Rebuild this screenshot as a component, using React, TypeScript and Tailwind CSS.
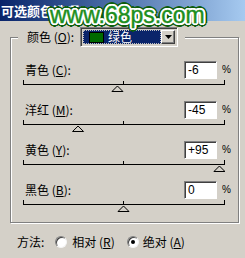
const rows = [
  { name: "青色", key: "C", value: "-6", v: -6 },
  { name: "洋红", key: "M", value: "-45", v: -45 },
  { name: "黄色", key: "Y", value: "+95", v: 95 },
  { name: "黑色", key: "B", value: "0", v: 0 },
];

const Slider = ({ v }: { v: number }) => {
  const cx = 100.5 + (v / 100) * 101;
  return (
    <svg width="202" height="22" className="block">
      <rect x="0" y="5" width="202" height="1" fill="#000" />
      <rect x="0" y="1" width="1" height="4" fill="#000" />
      <rect x="201" y="1" width="1" height="4" fill="#000" />
      <rect x="100" y="2" width="1" height="3" fill="#000" />
      <polygon
        points={`${cx},7 ${cx - 5.5},12.5 ${cx + 5.5},12.5`}
        fill="#d4d0c8"
        stroke="#000"
        strokeWidth="1"
      />
    </svg>
  );
};

const Radio = ({ checked }: { checked?: boolean }) => (
  <span className="w-[12px] h-[12px] rounded-full bg-white border border-t-[#808080] border-l-[#808080] border-b-[#f4f4f4] border-r-[#f4f4f4] shadow-[inset_1px_1px_0_#404040] flex items-center justify-center">
    {checked && <span className="w-[4px] h-[4px] rounded-full bg-black" />}
  </span>
);

export default function App() {
  return (
    <div className="w-[245px] h-[258px] bg-[#d4d0c8] relative overflow-hidden text-[12px] text-black font-['Noto_Sans_CJK_SC',sans-serif]">
      {/* title bar */}
      <div className="h-[21px] bg-gradient-to-r from-[#0a246a] to-[#a6caf0] flex items-center pl-[1px]">
        <span className="text-white font-bold text-[13px] leading-none">可选颜色选项</span>
      </div>

      {/* watermark */}
      <div className="absolute left-[50px] top-[4px] leading-[23px] text-[23px] whitespace-nowrap text-[#1d8f1d] font-['Liberation_Sans',Arial,sans-serif] pointer-events-none [-webkit-text-stroke:0.4px_#1d8f1d] [text-shadow:1px_0_0_#fff,-1px_0_0_#fff,0_1px_0_#fff,0_-1px_0_#fff,1px_1px_0_#fff,-1px_1px_0_#fff,1px_-1px_0_#fff,-1px_-1px_0_#fff,2px_0_0_#fff,-2px_0_0_#fff,0_2px_0_#fff,0_-2px_0_#fff,2px_1px_0_#fff,-2px_1px_0_#fff,2px_-1px_0_#fff,-2px_-1px_0_#fff,1px_2px_0_#fff,-1px_2px_0_#fff,1px_-2px_0_#fff,-1px_-2px_0_#fff,3px_0_0_#0d5c0d,-3px_0_0_#0d5c0d,0_3px_0_#0d5c0d,0_-3px_0_#0d5c0d,3px_1px_0_#0d5c0d,-3px_1px_0_#0d5c0d,3px_-1px_0_#0d5c0d,-3px_-1px_0_#0d5c0d,1px_3px_0_#0d5c0d,-1px_3px_0_#0d5c0d,1px_-3px_0_#0d5c0d,-1px_-3px_0_#0d5c0d,2px_2px_0_#0d5c0d,-2px_2px_0_#0d5c0d,2px_-2px_0_#0d5c0d,-2px_-2px_0_#0d5c0d,3px_2px_0_#0d5c0d,-3px_2px_0_#0d5c0d,3px_-2px_0_#0d5c0d,-3px_-2px_0_#0d5c0d,2px_3px_0_#0d5c0d,-2px_3px_0_#0d5c0d,2px_-3px_0_#0d5c0d,-2px_-3px_0_#0d5c0d,4px_0_0_#0d5c0d,-4px_0_0_#0d5c0d,0_4px_0_#0d5c0d,0_-4px_0_#0d5c0d]">
        www.68ps.com
      </div>

      {/* group box */}
      <div className="mt-[16px] ml-[10px] w-[229px] border border-[#808080] shadow-[inset_1px_1px_0_#fff,1px_1px_0_#fff] pb-[1px]">
        <div className="-mt-[11px] ml-[7px] w-fit pl-[9px] pr-[7px] bg-[#d4d0c8] flex items-center h-[20px] gap-[6px]">
          <span className="leading-none">
            颜色 (<span className="underline">O</span>):
          </span>
          <div className="w-[98px] h-[20px] flex items-center border border-t-[#808080] border-l-[#808080] border-b-white border-r-white shadow-[inset_1px_1px_0_#404040,inset_-1px_-1px_0_#d4d0c8] p-[2px]">
            <div className="flex-1 h-full bg-[#0a246a] border border-dotted border-[#c0c0c0] flex items-center pl-[5px] gap-[4px]">
              <span className="w-[15px] h-[11px] bg-[#006a00] border border-black" />
              <span className="text-white leading-none">绿色</span>
            </div>
            <div className="w-[14px] h-full bg-[#d4d0c8] border border-t-white border-l-white border-b-[#404040] border-r-[#404040] shadow-[inset_-1px_-1px_0_#808080] flex items-center justify-center">
              <svg width="7" height="4">
                <polygon points="0,0 7,0 3.5,4" fill="#000" />
              </svg>
            </div>
          </div>
        </div>

        <div className="mt-[14px] flex flex-col">
          {rows.map((r) => (
            <div key={r.key} className="h-[40px] flex flex-col">
              <div className="flex items-center h-[18px] pl-[14px] pr-[7px]">
                <span className="flex-1 leading-none">
                  {r.name} (<span className="underline">{r.key}</span>):
                </span>
                <div className="w-[33px] h-[18px] bg-white border border-t-[#808080] border-l-[#808080] border-b-white border-r-white shadow-[inset_1px_1px_0_#404040] flex items-center pl-[3px] font-['Liberation_Sans',Arial,sans-serif] text-[12px] leading-none">
                  {r.value}
                </div>
                <span className="ml-[5px] text-[10px] leading-none font-['Liberation_Sans',Arial,sans-serif]">%</span>
              </div>
              <div className="pl-[12px]">
                <Slider v={r.v} />
              </div>
            </div>
          ))}
        </div>
      </div>

      {/* method */}
      <div className="mt-[11px] pl-[17px] flex items-center h-[16px]">
        <span className="leading-none">方法:</span>
        <span className="ml-[11px]">
          <Radio />
        </span>
        <span className="ml-[5px] leading-none">
          相对 (<span className="underline">R</span>)
        </span>
        <span className="ml-[12px]">
          <Radio checked />
        </span>
        <span className="ml-[4px] leading-none">
          绝对 (<span className="underline">A</span>)
        </span>
      </div>
    </div>
  );
}
